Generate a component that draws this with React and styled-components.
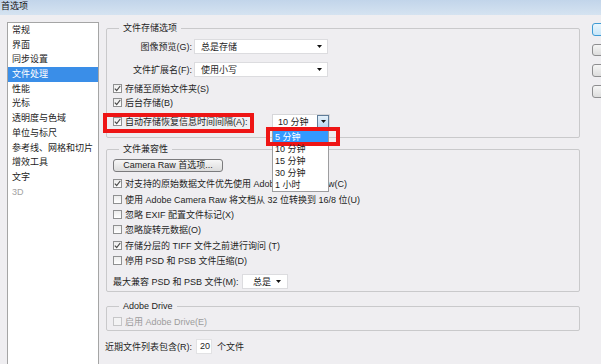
import React from "react";
import styled, { createGlobalStyle, css } from "styled-components";

const GlobalStyle = createGlobalStyle`
  html, body { margin: 0; padding: 0; }
  body {
    background: #efeef1;
    font-family: "Liberation Sans", "Noto Sans CJK SC", sans-serif;
    font-size: 9px;
    color: #1e1e1e;
    overflow: hidden;
  }
  * { box-sizing: border-box; }
`;

const Window = styled.div`
  width: 601px;
  height: 364px;
  overflow: hidden;
  display: flex;
  flex-direction: column;
  background: #efeef1;
`;

const TitleBar = styled.div`
  height: 15px;
  flex: none;
  background: linear-gradient(#c2d5ea, #d5e3f1);
  padding-left: 1px;
  line-height: 13px;
  color: #151515;
`;

const Body = styled.div`
  flex: 1;
  display: flex;
  padding: 7px 0 0 7px;
  gap: 7px;
  min-height: 0;
`;

const Sidebar = styled.ul`
  list-style: none;
  margin: 0;
  padding: 0;
  width: 92px;
  flex: none;
  height: 360px;
  background: #fff;
  border: 1px solid #a5a5a5;
`;

const SidebarItem = styled.li`
  height: 14.7px;
  line-height: 14.7px;
  padding-left: 4px;
  white-space: nowrap;
  color: ${(p) => (p.$disabled ? "#a2a2a2" : "#1c1c1c")};
  ${(p) =>
    p.$selected &&
    css`
      background: #3a8ee8;
      color: #fff;
    `}
`;

const Main = styled.div`
  width: 474px;
  flex: none;
  display: flex;
  flex-direction: column;
`;

const Group = styled.fieldset`
  margin: ${(p) => p.$mt || 0}px 0 0;
  padding: ${(p) => p.$pt}px 6px ${(p) => p.$pb}px;
  border: 1px solid #c9c9cb;
  border-radius: 2px;
  min-width: 0;
  display: flex;
  flex-direction: column;
`;

const Legend = styled.legend`
  padding: 0 4px;
  margin-left: 6px;
  line-height: 12px;
  color: #1e1e1e;
`;

const FieldRow = styled.div`
  display: flex;
  align-items: center;
  height: 15px;
  margin-top: ${(p) => p.$mt || 0}px;
  margin-left: ${(p) => p.$ml || 0}px;
  white-space: nowrap;
`;

const FieldLabel = styled.span`
  width: ${(p) => p.$w}px;
  text-align: ${(p) => p.$align || "right"};
  margin-right: ${(p) => p.$gap || 0}px;
  flex: none;
`;

const Select = styled.div`
  position: relative;
  width: ${(p) => p.$w}px;
  height: 15px;
  flex: none;
  background: #fff;
  border: 1px solid #dcdcdf;
  display: flex;
  align-items: center;
  padding-left: ${(p) => p.$pl || 6}px;
`;

const Arrow = styled.svg`
  position: absolute;
  right: ${(p) => p.$r || 5}px;
  top: 5px;
`;

const Caret = ({ r }) => (
  <Arrow $r={r} width="5" height="3" viewBox="0 0 5 3">
    <polygon points="0,0 5,0 2.5,3" fill="#111" />
  </Arrow>
);

const CheckRow = styled.label`
  display: flex;
  align-items: center;
  gap: 3px;
  height: ${(p) => p.$h || 14}px;
  margin-top: ${(p) => p.$mt || 0}px;
  white-space: nowrap;
  color: ${(p) => (p.$disabled ? "#9c9c9c" : "inherit")};
`;

const Box = styled.span`
  width: 9px;
  height: 9px;
  flex: none;
  border: 1px solid ${(p) => (p.$disabled ? "#c6c6c8" : "#8f9091")};
  background: ${(p) =>
    p.$disabled ? "#f3f3f4" : "linear-gradient(#ececec, #ffffff)"};
  display: flex;
  align-items: center;
  justify-content: center;
`;

const Checkbox = ({ checked, disabled }) => (
  <Box $disabled={disabled}>
    {checked && (
      <svg width="7" height="7" viewBox="0 0 7 7">
        <path
          d="M0.8 3.6 L2.7 5.5 L6.2 1"
          fill="none"
          stroke="#4a4a4a"
          strokeWidth="1.2"
        />
      </svg>
    )}
  </Box>
);

const Check = ({ checked, disabled, children, h, mt }) => (
  <CheckRow $disabled={disabled} $h={h} $mt={mt}>
    <Checkbox checked={checked} disabled={disabled} />
    <span>{children}</span>
  </CheckRow>
);

const AnnotatedCheck = styled(CheckRow)`
  position: relative;
  width: 135px;
  height: 15px;
  flex: none;
  &::after {
    content: "";
    position: absolute;
    top: -1px;
    bottom: -4px;
    left: -10px;
    right: -6px;
    border: 4px solid #ee1515;
    pointer-events: none;
  }
`;

const ComboWrap = styled.div`
  position: relative;
  margin-left: 24px;
  width: 58px;
  height: 15px;
  flex: none;
`;

const Combo = styled.div`
  height: 15px;
  background: #fff;
  border: 1px solid #d6d6d9;
  display: flex;
  align-items: center;
  padding-left: 5px;
`;

const DropButton = styled.span`
  margin-left: auto;
  width: 12px;
  height: 13px;
  border: 1px solid #5f7c99;
  background: linear-gradient(#e4f1fb, #b9d6ee);
  display: flex;
  align-items: center;
  justify-content: center;
`;

const DropList = styled.ul`
  position: absolute;
  top: 15px;
  left: 0;
  width: 57px;
  margin: 0;
  padding: 1px 0 0;
  list-style: none;
  background: #fff;
  border: 1px solid #9d9d9f;
  z-index: 5;
`;

const DropItem = styled.li`
  position: relative;
  height: 12px;
  line-height: 12px;
  padding-left: 2px;
  ${(p) =>
    p.$selected &&
    css`
      background: #3399ff;
      color: #fff;
      &::after {
        content: "";
        position: absolute;
        top: -4px;
        bottom: -3px;
        left: -7px;
        right: -12px;
        border: 4px solid #ee1515;
      }
    `}
`;

const ButtonWrap = styled.div`
  display: flex;
`;

const PushButton = styled.button`
  width: 110px;
  height: 13px;
  padding: 0;
  font: inherit;
  color: #1e1e1e;
  border: 1px solid #7b7b7d;
  border-radius: 3px;
  background: linear-gradient(#f7f7f7, #dcdcdc);
  line-height: 11px;
`;

const NumInput = styled.div`
  width: 16px;
  height: 15px;
  background: #fff;
  border: 1px solid #e2e2e4;
  padding-left: 3px;
  line-height: 13px;
  flex: none;
`;

const Suffix = styled.span`
  margin-left: 5px;
`;

const ButtonCol = styled.div`
  flex: none;
  display: flex;
  flex-direction: column;
  gap: 8.2px;
  padding-top: 1px;
  margin-left: 5px;
`;

const SideButton = styled.div`
  width: 30px;
  height: 12.5px;
  border-radius: 3px;
  border: 1px solid ${(p) => (p.$primary ? "#3f9bd4" : "#8e8e90")};
  background: ${(p) =>
    p.$primary
      ? "linear-gradient(#eaf6fd, #c8e6f8)"
      : "linear-gradient(#f6f6f6, #dddddd)"};
`;

const navItems = [
  "常规",
  "界面",
  "同步设置",
  "文件处理",
  "性能",
  "光标",
  "透明度与色域",
  "单位与标尺",
  "参考线、网格和切片",
  "增效工具",
  "文字",
  "3D",
];

const intervals = ["5 分钟", "10 分钟", "15 分钟", "30 分钟", "1 小时"];

const compatChecks = [
  { t: "对支持的原始数据文件优先使用 Adobe Camera Raw(C)", c: true },
  { t: "使用 Adobe Camera Raw 将文档从 32 位转换到 16/8 位(U)", c: false },
  { t: "忽略 EXIF 配置文件标记(X)", c: false },
  { t: "忽略旋转元数据(O)", c: false },
  { t: "存储分层的 TIFF 文件之前进行询问 (T)", c: true },
  { t: "停用 PSD 和 PSB 文件压缩(D)", c: false },
];

export default function App() {
  return (
    <>
      <GlobalStyle />
      <Window>
        <TitleBar>首选项</TitleBar>
        <Body>
          <Sidebar>
            {navItems.map((n, i) => (
              <SidebarItem key={n} $selected={i === 3} $disabled={n === "3D"}>
                {n}
              </SidebarItem>
            ))}
          </Sidebar>

          <Main>
            <Group $pt={5} $pb={8}>
              <Legend>文件存储选项</Legend>
              <FieldRow>
                <FieldLabel $w={79} $gap={2}>图像预览(G):</FieldLabel>
                <Select $w={134}>
                  总是存储
                  <Caret />
                </Select>
              </FieldRow>
              <FieldRow $mt={8}>
                <FieldLabel $w={79} $gap={2}>文件扩展名(F):</FieldLabel>
                <Select $w={134}>
                  使用小写
                  <Caret />
                </Select>
              </FieldRow>
              <Check checked mt={4}>存储至原始文件夹(S)</Check>
              <Check checked>后台存储(B)</Check>
              <FieldRow $mt={5}>
                <AnnotatedCheck>
                  <Checkbox checked />
                  <span>自动存储恢复信息时间间隔(A):</span>
                </AnnotatedCheck>
                <ComboWrap>
                  <Combo>
                    10 分钟
                    <DropButton>
                      <svg width="5" height="3" viewBox="0 0 5 3">
                        <polygon points="0,0 5,0 2.5,3" fill="#111" />
                      </svg>
                    </DropButton>
                  </Combo>
                  <DropList>
                    {intervals.map((v, i) => (
                      <DropItem key={v} $selected={i === 0}>
                        {v}
                      </DropItem>
                    ))}
                  </DropList>
                </ComboWrap>
              </FieldRow>
            </Group>

            <Group $mt={5} $pt={4} $pb={2}>
              <Legend>文件兼容性</Legend>
              <ButtonWrap>
                <PushButton type="button">Camera Raw 首选项...</PushButton>
              </ButtonWrap>
              {compatChecks.map((c, i) => (
                <Check key={c.t} checked={c.c} h={15.3} mt={i === 0 ? 4.3 : 0}>
                  {c.t}
                </Check>
              ))}
              <FieldRow $mt={6.3}>
                <FieldLabel $w={129} $align="left">
                  最大兼容 PSD 和 PSB 文件(M):
                </FieldLabel>
                <Select $w={46} $pl={10}>
                  总是
                  <Caret r={6} />
                </Select>
              </FieldRow>
            </Group>

            <Group $mt={8} $pt={2} $pb={2}>
              <Legend>Adobe Drive</Legend>
              <Check disabled>启用 Adobe Drive(E)</Check>
            </Group>

            <FieldRow $mt={8} $ml={-1}>
              <FieldLabel $w={91} $align="left">
                近期文件列表包含(R):
              </FieldLabel>
              <NumInput>20</NumInput>
              <Suffix>个文件</Suffix>
            </FieldRow>
          </Main>

          <ButtonCol>
            <SideButton $primary />
            <SideButton />
            <SideButton />
            <SideButton />
          </ButtonCol>
        </Body>
      </Window>
    </>
  );
}
